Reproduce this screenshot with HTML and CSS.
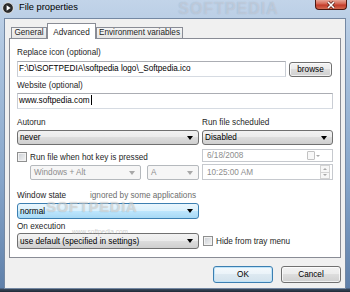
FILE: index.html
```html
<!DOCTYPE html>
<html lang="en">
<head>
    <meta charset="UTF-8">
    <meta name="viewport" content="width=device-width, initial-scale=1.0">
    <title>File properties</title>
    <link rel="stylesheet" href="styles.css">
</head>
<body>
    <div class="window">
        <div class="titlebar">
            <svg class="app-icon" width="12" height="12" viewBox="0 0 12 12">
                <circle cx="6" cy="6" r="5.4" fill="#2b2b2b" stroke="#e6e6e6" stroke-width="1"/>
                <path d="M4.6 3.3 L8.6 6 L4.6 8.7 Z" fill="#fff"/>
            </svg>
            <span class="title">File properties</span>
            <div class="close-btn">
                <svg width="10" height="8" viewBox="0 0 10 8">
                    <path d="M2 1 L8 7 M8 1 L2 7" stroke="#5a231b" stroke-width="3"/>
                    <path d="M2 1 L8 7 M8 1 L2 7" stroke="#fff" stroke-width="1.6"/>
                </svg>
            </div>
        </div>

        <div class="client">
            <div class="tabs">
                <div class="tab tab-general">General</div>
                <div class="tab tab-advanced active">Advanced</div>
                <div class="tab tab-env">Environment variables</div>
            </div>

            <div class="panel">
                <div class="label first">Replace icon (optional)</div>
                <div class="row icon-row">
                    <div class="input icon-input">F:\D\SOFTPEDIA\softpedia logo\_Softpedia.ico</div>
                    <div class="btn browse">browse</div>
                </div>

                <div class="label">Website (optional)</div>
                <div class="input website">www.softpedia.com<span class="caret"></span></div>

                <div class="cols schedule">
                    <div class="col">
                        <div class="label">Autorun</div>
                        <div class="combo combo-top"><span>never</span><span class="arrow"></span></div>
                        <div class="check-row hotkey">
                            <span class="checkbox"></span>
                            <span>Run file when hot key is pressed</span>
                        </div>
                        <div class="row keys">
                            <div class="combo disabled mod-combo"><span>Windows + Alt</span><span class="arrow"></span></div>
                            <div class="combo disabled key-combo"><span>A</span><span class="arrow"></span></div>
                        </div>
                    </div>
                    <div class="col">
                        <div class="label">Run file scheduled</div>
                        <div class="combo combo-top"><span>Disabled</span><span class="arrow"></span></div>
                        <div class="field date">
                            <span>6/18/2008</span>
                            <span class="picker"><span class="pick-box"></span><span class="arrow"></span></span>
                        </div>
                        <div class="field time">
                            <span>10:25:00 AM</span>
                            <span class="spin">
                                <span class="spin-btn"><span class="arrow up"></span></span>
                                <span class="spin-btn"><span class="arrow"></span></span>
                            </span>
                        </div>
                    </div>
                </div>

                <div class="state-label">
                    <span class="state-name">Window state</span>
                    <span class="hint">ignored by some applications</span>
                </div>
                <div class="combo focused state-combo"><span>normal</span><span class="arrow"></span></div>

                <div class="label exec-label">On execution</div>
                <div class="cols exec">
                    <div class="combo exec-combo"><span>use default (specified in settings)</span><span class="arrow"></span></div>
                    <div class="check-row">
                        <span class="checkbox"></span>
                        <span>Hide from tray menu</span>
                    </div>
                </div>
            </div>

            <div class="buttons">
                <div class="btn default">OK</div>
                <div class="btn">Cancel</div>
            </div>
        </div>

        <!-- softpedia watermarks over the shot -->
        <div class="watermark wm-title">SOFTPEDIA</div>
        <div class="watermark wm-mid">SOFTPEDIA</div>
        <div class="watermark wm-url">www.softpedia.com</div>
    </div>
</body>
</html>
```

FILE: styles.css
```css
* {
    box-sizing: border-box;
}

body {
    margin: 0;
    font-family: "Liberation Sans", Arial, sans-serif;
    font-size: 8.2px;
    color: #1e1e1e;
}

.window {
    position: relative;
    width: 350px;
    height: 292px;
    padding: 0 4px 3px 4px;
    display: flex;
    flex-direction: column;
    overflow: hidden;
    background: linear-gradient(to bottom, #c2d4e9 0, #abc3de 60px, #86a5ca 180px, #5f80aa 288px, #3b4a5d 289px, #1f2835 292px);
}

/* title bar */
.titlebar {
    height: 18px;
    display: flex;
    align-items: flex-start;
}

.app-icon {
    margin: 2px 0 0 -2px;
}

.title {
    margin-left: 5px;
    padding-top: 2px;
    font-family: "Liberation Sans", Arial, sans-serif;
    font-size: 9.3px;
    line-height: 11px;
    color: #000;
}

.close-btn {
    margin-left: auto;
    margin-right: -1px;
    width: 32px;
    height: 10px;
    display: flex;
    align-items: center;
    justify-content: center;
    border: 1px solid #4d1710;
    border-top: none;
    border-radius: 0 0 4px 4px;
    background: linear-gradient(to bottom, #e7a596 0%, #d4624f 45%, #c23a2a 55%, #d26a50 100%);
}

/* client area */
.client {
    flex: 1;
    display: flex;
    flex-direction: column;
    padding: 4px 4px 5px 4px;
    background-color: #f0f0f0;
    border: 1px solid #7488a3;
}

.tabs {
    position: relative;
    z-index: 1;
    height: 16px;
    display: flex;
    align-items: flex-end;
    padding-left: 2px;
}

.tab {
    height: 11px;
    margin-bottom: 1px;
    line-height: 10px;
    text-align: center;
    white-space: nowrap;
    border: 1px solid #898c95;
    border-bottom: none;
    background: linear-gradient(to bottom, #f4f4f4, #e6e6e6);
}

.tab-general {
    width: 36px;
}

.tab-advanced {
    width: 49px;
}

.tab-env {
    width: 87px;
}

.tab.active {
    height: 16px;
    margin-bottom: 0;
    padding-top: 3px;
    line-height: 11px;
    background: #fff;
}

.panel {
    margin-top: -1px;
    padding: 0 7px 8px 7px;
    background-color: #fff;
    border: 1px solid #898c95;
}

.label {
    height: 11px;
    line-height: 11px;
    margin-top: 3px;
    white-space: nowrap;
}

.label.first {
    margin-top: 8px;
}

.row {
    display: flex;
}

.icon-row {
    margin-top: 3px;
}

.input {
    height: 16px;
    padding: 0 1px;
    line-height: 14px;
    color: #000;
    white-space: nowrap;
    overflow: hidden;
    background-color: #fff;
    border: 1px solid #abadb3;
    border-color: #abadb3 #c9cdd4 #d6dbe2 #c9cdd4;
}

.icon-input {
    width: 269px;
}

.website {
    margin-top: 2px;
}

.caret {
    display: inline-block;
    width: 1px;
    height: 10px;
    margin-left: 1px;
    vertical-align: -2px;
    background-color: #000;
}

.btn {
    text-align: center;
    color: #000;
    border: 1px solid #707070;
    border-radius: 3px;
    background: linear-gradient(to bottom, #f2f2f2 0%, #ebebeb 49%, #dddddd 50%, #cfcfcf 100%);
    box-shadow: inset 0 0 0 1px rgba(255, 255, 255, 0.7);
}

.browse {
    width: 43px;
    height: 15px;
    margin: 1px 0 0 3px;
    line-height: 13px;
}

/* two column block */
.cols {
    display: grid;
    grid-template-columns: 182px 131px;
    column-gap: 3px;
}

.schedule {
    margin-top: 8px;
}

.schedule .label {
    margin-top: 0;
}

.col {
    display: flex;
    flex-direction: column;
}

.combo {
    height: 15px;
    display: flex;
    align-items: center;
    justify-content: space-between;
    padding: 0 5px 0 2px;
    color: #000;
    white-space: nowrap;
    border: 1px solid #707070;
    border-radius: 3px;
    background: linear-gradient(to bottom, #f2f2f2 0%, #ebebeb 49%, #dddddd 50%, #cfcfcf 100%);
}

.arrow {
    width: 0;
    height: 0;
    border-left: 3px solid transparent;
    border-right: 3px solid transparent;
    border-top: 4px solid #000;
}

.combo-top {
    margin-top: 2px;
}

.combo.disabled {
    color: #8d8d8d;
    border-color: #b5b9bd;
    border-radius: 2px;
    background: #f6f6f6;
}

.combo.disabled .arrow {
    border-top-color: #a8a8a8;
}

.combo.focused {
    border-color: #3c7fb1;
    background: linear-gradient(to bottom, #eaf6fd 0%, #d9f0fc 49%, #bee6fd 50%, #a7d9f5 100%);
}

.check-row {
    height: 12px;
    display: flex;
    align-items: center;
    gap: 3px;
    white-space: nowrap;
}

.hotkey {
    margin-top: 6px;
}

.checkbox {
    width: 10px;
    height: 10px;
    border: 1px solid #8e8f8f;
    background: linear-gradient(135deg, #c9cdd3, #f5f5f5);
    box-shadow: inset 0 0 0 1px #f2f2f2;
}

.keys {
    margin-top: 2px;
    padding-left: 13px;
    gap: 6px;
}

.mod-combo {
    width: 111px;
    padding-left: 3px;
}

.key-combo {
    flex: 1;
    padding-left: 3px;
    background: #fff;
}

.field {
    display: flex;
    align-items: center;
    justify-content: space-between;
    padding: 0 1px 0 4px;
    color: #8d8d8d;
    background-color: #fff;
    border: 1px solid #c6c9ce;
}

.date {
    height: 13px;
    margin-top: 4px;
}

.picker {
    display: flex;
    align-items: center;
    gap: 1px;
    margin-right: 11px;
}

.pick-box {
    width: 8px;
    height: 9px;
    border: 1px solid #c2c2c2;
    border-radius: 1px;
    background: #f8f8f8;
}

.picker .arrow,
.spin .arrow {
    border-left-width: 2px;
    border-right-width: 2px;
    border-top: 2px solid #a8a8a8;
}

.time {
    height: 16px;
    margin-top: 2px;
}

.spin {
    width: 10px;
    height: 14px;
    display: flex;
    flex-direction: column;
    margin-right: 1px;
}

.spin-btn {
    flex: 1;
    display: flex;
    align-items: center;
    justify-content: center;
    border: 1px solid #d3d3d3;
    background: #f7f7f7;
}

.spin-btn + .spin-btn {
    border-top: none;
}

.spin .arrow.up {
    border-top: none;
    border-bottom: 2px solid #a8a8a8;
}

/* window state / execution */
.state-label {
    display: flex;
    height: 11px;
    line-height: 11px;
    margin-top: 10px;
    white-space: nowrap;
}

.state-name {
    width: 73px;
}

.hint {
    color: #6d6d6d;
}

.state-combo {
    width: 182px;
    height: 16px;
    margin-top: 2px;
}

.exec-label {
    margin-top: 2px;
}

.exec {
    margin-top: 1px;
    align-items: center;
}

.exec-combo {
    height: 16px;
}

.exec .check-row {
    padding-left: 1px;
}

/* dialog buttons */
.buttons {
    display: flex;
    justify-content: flex-end;
    gap: 8px;
    margin-top: 8px;
}

.buttons .btn {
    width: 60px;
    height: 17px;
    line-height: 15px;
}

.btn.default {
    border-color: #3c7fb1;
    box-shadow: inset 0 0 0 1px #bfe3f8;
    background: linear-gradient(to bottom, #f4f9fc 0%, #eaf3f9 49%, #dde9f1 50%, #d2e2ec 100%);
}

/* watermarks */
.watermark {
    position: absolute;
    font-family: "Liberation Sans", Arial, sans-serif;
    font-weight: bold;
    white-space: nowrap;
    pointer-events: none;
}

.wm-title {
    left: 178px;
    top: 0;
    font-size: 16px;
    line-height: 18px;
    letter-spacing: 1px;
    color: rgba(255, 255, 255, 0.28);
    text-shadow: 0 0 1px rgba(60, 80, 110, 0.25);
}

.wm-mid {
    left: 46px;
    top: 199px;
    font-size: 15px;
    line-height: 16px;
    letter-spacing: 0.6px;
    color: rgba(255, 255, 255, 0.5);
    text-shadow: 0 0 1px rgba(0, 0, 0, 0.3);
}

.wm-url {
    left: 72px;
    top: 228px;
    font-size: 6.5px;
    line-height: 8px;
    font-weight: normal;
    color: rgba(170, 170, 170, 0.6);
}
```
